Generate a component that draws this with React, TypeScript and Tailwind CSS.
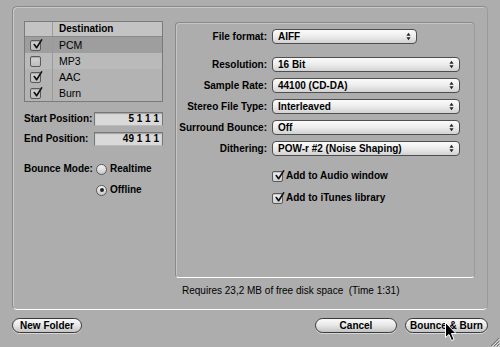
import React from 'react';

const Check = () => (
  <svg viewBox="0 0 12 12" className="absolute left-[1px] top-[-2px] w-[11px] h-[11px]">
    <path d="M2.5 6 L5 9.5 L10.5 1" fill="none" stroke="#111" strokeWidth="1.8" strokeLinecap="round" strokeLinejoin="round" />
  </svg>
);

const Checkbox = ({ checked, dim }: { checked?: boolean; dim?: boolean }) => (
  <div
    className={`relative w-[11px] h-[11px] rounded-[2px] border border-[#5a5a5a] shadow-[inset_0_1px_1px_rgba(0,0,0,0.2)] ${
      dim ? 'bg-gradient-to-b from-[#d6d6d6] to-[#bdbdbd]' : 'bg-gradient-to-b from-[#f4f4f4] to-[#cfcfcf]'
    }`}
  >
    {checked && <Check />}
  </div>
);

const Radio = ({ on }: { on?: boolean }) => (
  <div className="w-[11px] h-[11px] rounded-full border border-[#5a5a5a] bg-gradient-to-b from-[#f4f4f4] to-[#c9c9c9] flex items-center justify-center">
    {on && <div className="w-[4px] h-[4px] rounded-full bg-[#222]" />}
  </div>
);

const Popup = ({ value, w }: { value: string; w: string }) => (
  <div
    className={`${w} h-[15px] rounded-[4px] border border-[#4e4e4e] bg-gradient-to-b from-[#fbfbfb] via-[#ececec] to-[#d2d2d2] flex items-center justify-between pl-[5px] pr-[5px] font-bold`}
  >
    <span>{value}</span>
    <svg viewBox="0 0 6 10" className="w-[5px] h-[9px]">
      <path d="M3 0.5 L5.5 4 L0.5 4 Z" fill="#222" />
      <path d="M3 9.5 L5.5 6 L0.5 6 Z" fill="#222" />
    </svg>
  </div>
);

const PillButton = ({ label, w }: { label: string; w: string }) => (
  <div
    className={`${w} h-[15px] rounded-full border border-[#3a3a3a] bg-gradient-to-b from-[#fafafa] via-[#e6e6e6] to-[#c4c4c4] flex items-center justify-center font-bold shadow-[0_1px_0_rgba(255,255,255,0.5)]`}
  >
    {label}
  </div>
);

const rows = [
  { name: 'PCM', checked: true, selected: true },
  { name: 'MP3', checked: false },
  { name: 'AAC', checked: true },
  { name: 'Burn', checked: true },
];

const settings = [
  { label: 'Resolution:', value: '16 Bit' },
  { label: 'Sample Rate:', value: '44100 (CD-DA)' },
  { label: 'Stereo File Type:', value: 'Interleaved' },
  { label: 'Surround Bounce:', value: 'Off' },
  { label: 'Dithering:', value: 'POW-r #2 (Noise Shaping)' },
];

export default function App() {
  return (
    <div className="relative w-[500px] h-[347px] overflow-hidden bg-[#adadad] text-[10px] leading-[12px] text-black font-['Liberation_Sans',Arial,sans-serif]">
      <div className="pt-[6px] px-[12px]">
        {/* outer group box */}
        <div className="h-[304px] w-[476px] rounded-[5px] border border-t-[#8a8a8a] border-l-[#8a8a8a] border-r-[#9a9a9a] border-b-white shadow-[inset_1px_1px_0_rgba(255,255,255,0.35)] flex gap-[12px] pl-[11px] pt-[14px]">
          {/* left column */}
          <div className="w-[139px] flex flex-col">
            <div className="border border-[#7a7a7a] bg-[#b6b6b6]">
              <div className="h-[15px] flex bg-[#c3c3c3] border-b border-[#8a8a8a]">
                <div className="w-[28px] border-r border-[#9a9a9a]" />
                <div className="pl-[6px] flex items-center font-bold">Destination</div>
              </div>
              {rows.map((r) => (
                <div key={r.name} className={`h-[16px] flex ${r.selected ? 'bg-[#9e9e9e]' : r.name === 'MP3' ? 'bg-[#bababa]' : 'bg-[#b3b3b3]'}`}>
                  <div className="w-[28px] border-r border-[#9a9a9a] flex items-center pl-[5px]">
                    <Checkbox checked={r.checked} dim />
                  </div>
                  <div className="pl-[6px] flex items-center text-[10.5px]">{r.name}</div>
                </div>
              ))}
            </div>

            <div className="mt-[10px] flex items-center gap-[6px]">
              <div className="w-[64px] text-right font-bold whitespace-nowrap">Start Position:</div>
              <div className="w-[69px] h-[14px] bg-[#d9d9d9] border border-[#777] border-b-[#bbb] shadow-[inset_0_1px_1px_rgba(0,0,0,0.25)] text-right pr-[3px] font-bold leading-[12px]">
                5 1 1 1
              </div>
            </div>
            <div className="mt-[6px] flex items-center gap-[6px]">
              <div className="w-[64px] text-right font-bold whitespace-nowrap">End Position:</div>
              <div className="w-[69px] h-[14px] bg-[#d9d9d9] border border-[#777] border-b-[#bbb] shadow-[inset_0_1px_1px_rgba(0,0,0,0.25)] text-right pr-[3px] font-bold leading-[12px]">
                49 1 1 1
              </div>
            </div>

            <div className="mt-[17px] flex items-center">
              <div className="w-[66px] text-right font-bold whitespace-nowrap">Bounce Mode:</div>
              <div className="ml-[6px]">
                <Radio />
              </div>
              <div className="ml-[3px] font-bold">Realtime</div>
            </div>
            <div className="mt-[9px] flex items-center ml-[72px]">
              <Radio on />
              <div className="ml-[3px] font-bold">Offline</div>
            </div>
          </div>

          {/* right column */}
          <div className="w-[300px] flex flex-col">
            <div className="mt-[1px] h-[256px] rounded-[4px] border border-t-[#8a8a8a] border-l-[#8a8a8a] border-r-[#9a9a9a] border-b-white shadow-[inset_1px_1px_0_rgba(255,255,255,0.3)] pt-[6px]">
              <div className="flex items-center gap-[5px]">
                <div className="w-[91px] text-right font-bold whitespace-nowrap">File format:</div>
                <Popup value="AIFF" w="w-[145px]" />
              </div>
              <div className="mt-[13px] flex flex-col gap-[6px]">
                {settings.map((s) => (
                  <div key={s.label} className="flex items-center gap-[5px]">
                    <div className="w-[91px] text-right font-bold whitespace-nowrap">{s.label}</div>
                    <Popup value={s.value} w="w-[188px]" />
                  </div>
                ))}
              </div>
              <div className="mt-[14px] ml-[96px] flex items-center gap-[3px]">
                <Checkbox checked />
                <span className="font-bold">Add to Audio window</span>
              </div>
              <div className="mt-[10px] ml-[96px] flex items-center gap-[3px]">
                <Checkbox checked />
                <span className="font-bold">Add to iTunes library</span>
              </div>
            </div>
            <div className="mt-[7px] pl-[7px] whitespace-pre">Requires 23,2 MB of free disk space  (Time 1:31)</div>
          </div>
        </div>
      </div>

      {/* bottom buttons */}
      <div className="mt-[8px] px-[12px] flex justify-between">
        <PillButton label="New Folder" w="w-[70px]" />
        <div className="flex gap-[8px]">
          <PillButton label="Cancel" w="w-[82px]" />
          <PillButton label="Bounce & Burn" w="w-[83px]" />
        </div>
      </div>

      {/* mouse cursor */}
      <svg viewBox="0 0 12 20" className="absolute left-[445px] top-[322px] w-[12px] h-[20px]">
        <path d="M0.5 0.5 L0.5 15.5 L4 12.5 L6.5 18.5 L9 17.5 L6.5 11.5 L11 11.5 Z" fill="#000" stroke="#fff" strokeWidth="1" strokeLinejoin="round" />
      </svg>

      {/* resize grip */}
      <svg viewBox="0 0 12 12" className="absolute right-0 bottom-0 w-[12px] h-[12px]">
        <path d="M11 3 L3 11 M11 6 L6 11 M11 9 L9 11" stroke="#707070" strokeWidth="1" />
        <path d="M12 4 L4 12 M12 7 L7 12 M12 10 L10 12" stroke="#dcdcdc" strokeWidth="1" />
      </svg>
    </div>
  );
}
